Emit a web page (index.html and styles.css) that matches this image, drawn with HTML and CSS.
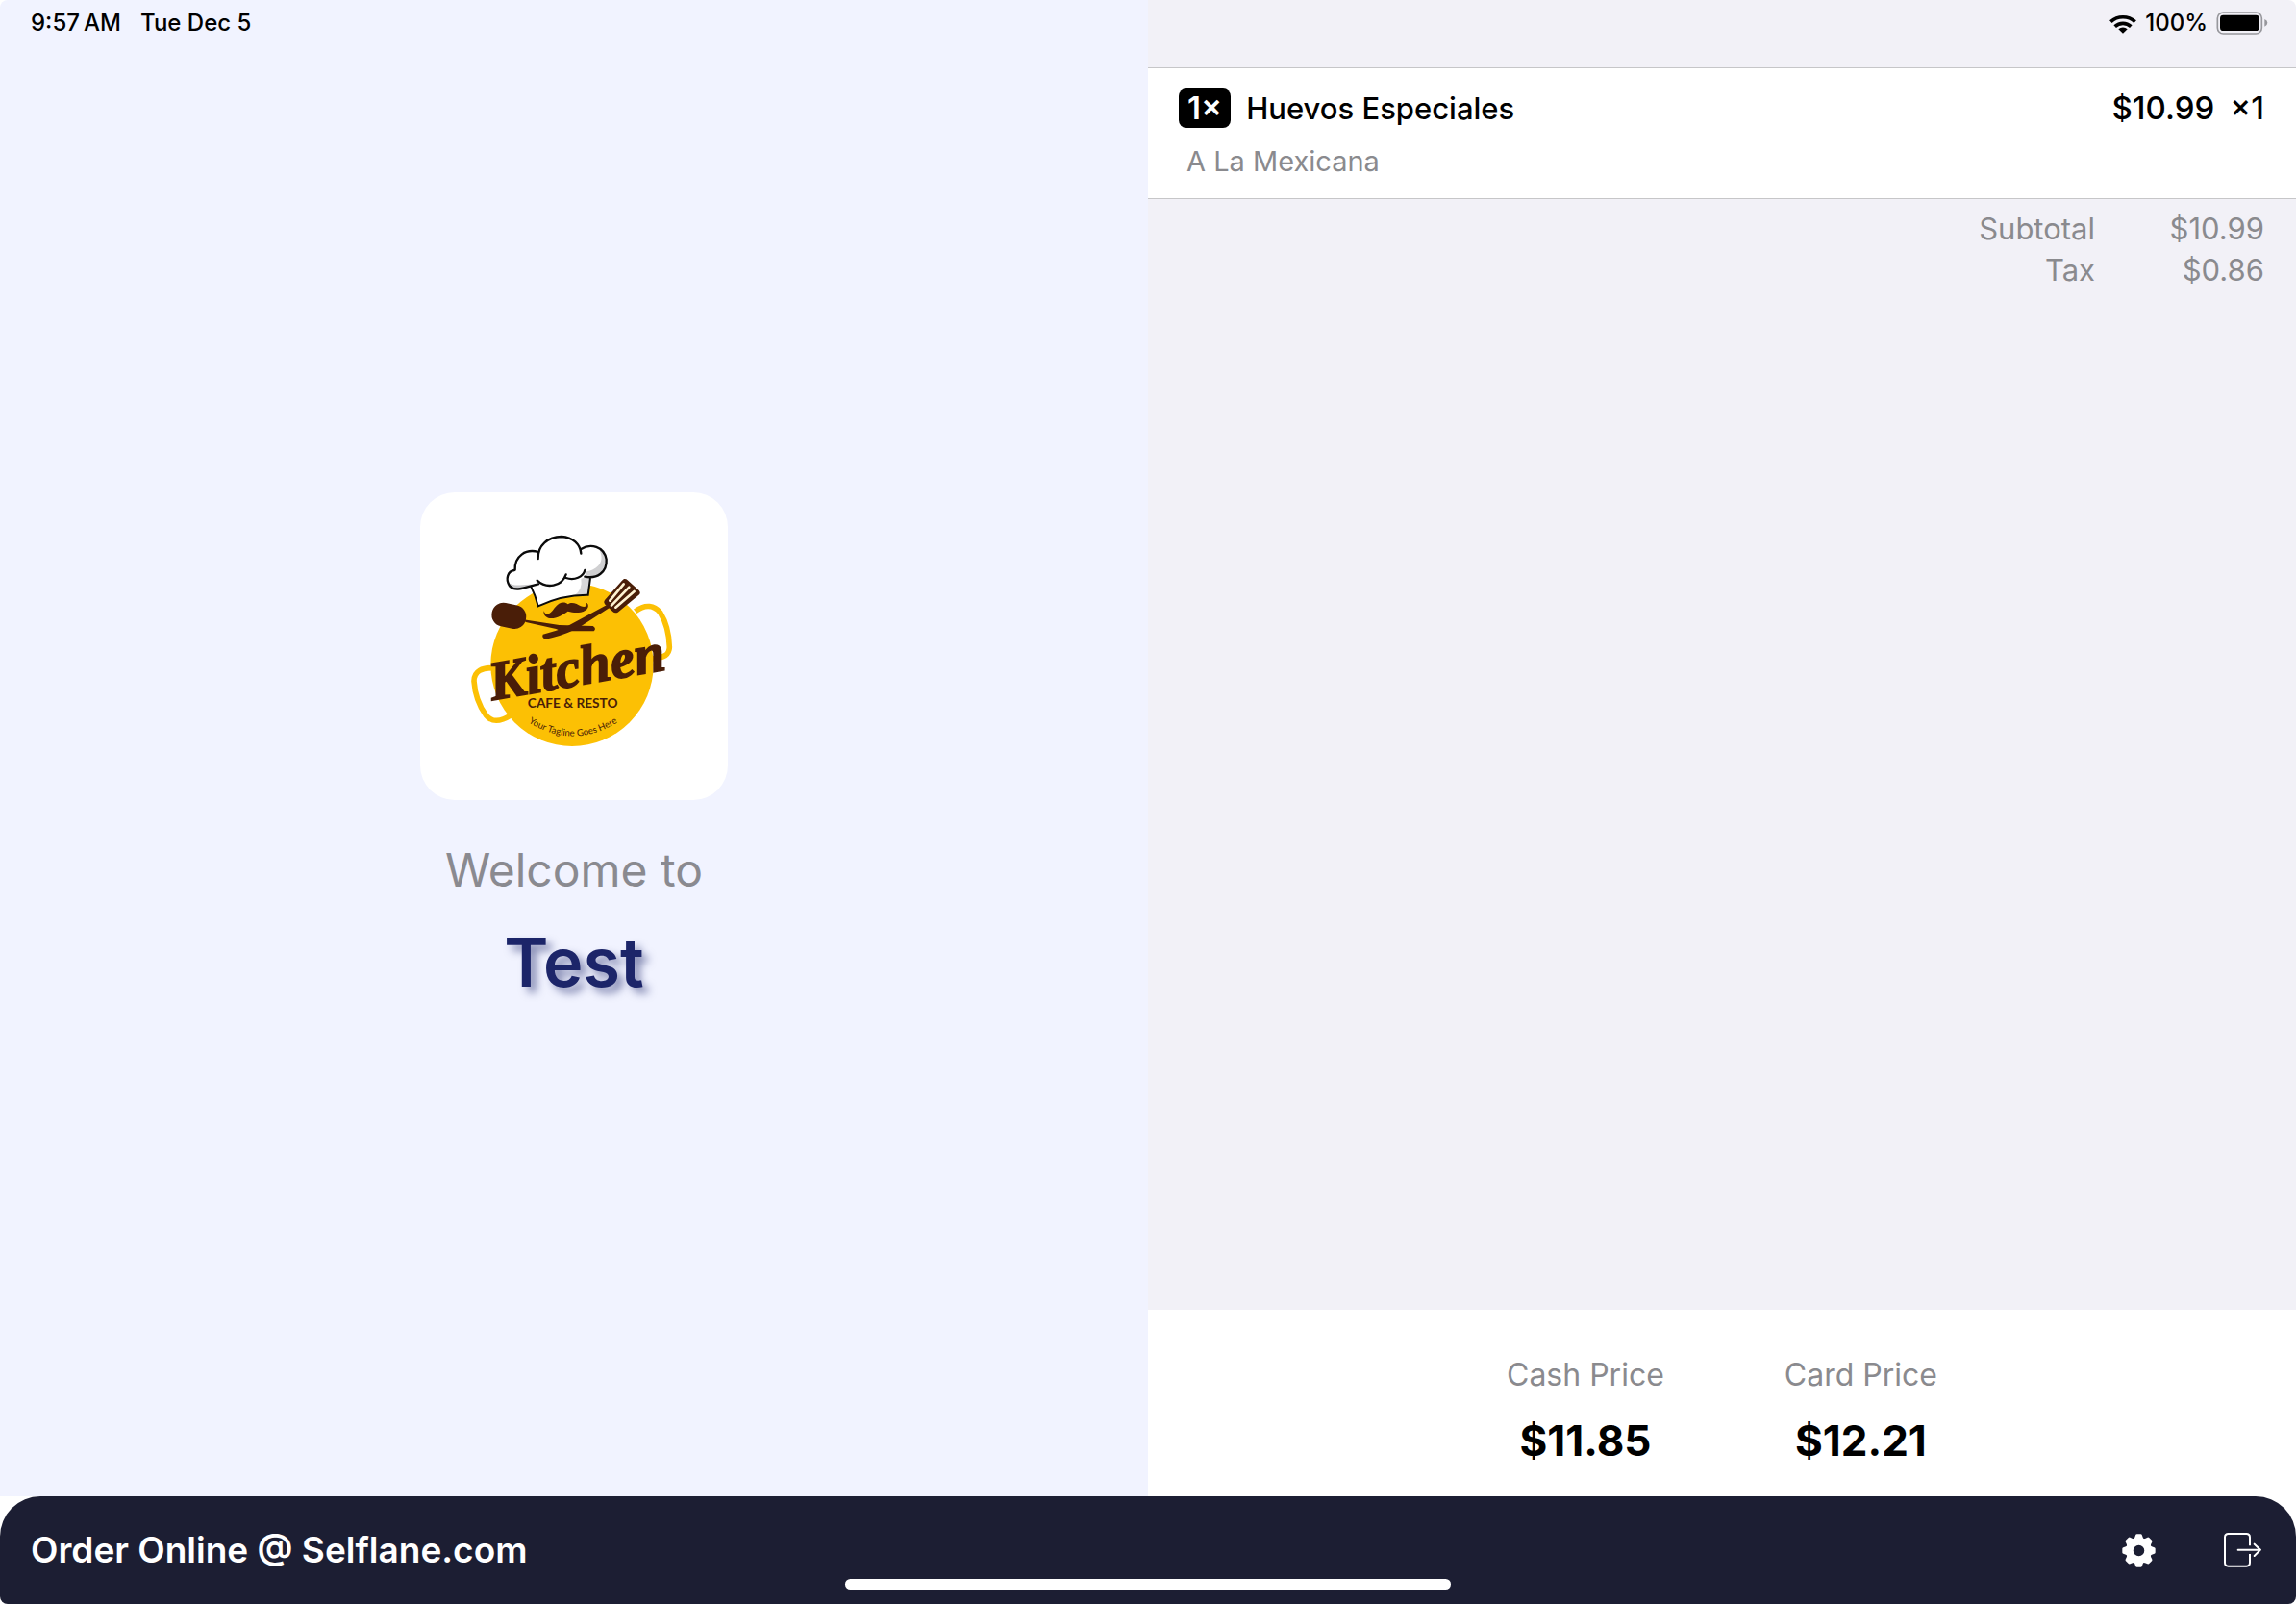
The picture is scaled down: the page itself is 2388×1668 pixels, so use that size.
FILE: index.html
```html
<!DOCTYPE html>
<html lang="en">
<head>
<meta charset="utf-8">
<meta name="viewport" content="width=device-width, initial-scale=1">
<title>Customer Display</title>
<link rel="stylesheet" href="styles.css">
</head>
<body>
<div class="screen">
  <header class="status">
    <div class="status-group">
      <span>9:57&#8201;AM</span>
      <span>Tue Dec 5</span>
    </div>
    <div class="status-group status-right">
      <svg class="wifi" viewBox="165 40 84 63" aria-hidden="true">
        <g fill="none" stroke="#000" stroke-width="11">
          <path d="M169 66A56 56 0 0 1 245 66"/>
          <path d="M182 81A36 36 0 0 1 232 81"/>
        </g>
        <path d="M207 102L193 89A20 20 0 0 1 221 89Z"/>
      </svg>
      <span>100%</span>
      <svg class="battery" viewBox="494 36 162 72" aria-hidden="true">
        <rect x="498" y="39" width="138" height="66" rx="18" fill="none" stroke="#97979c" stroke-width="5"/>
        <rect x="506" y="47" width="122" height="49" rx="10"/>
        <path d="M645 60Q654 64 654 71.500Q654 79 645 83Z" fill="#97979c"/>
      </svg>
    </div>
  </header>

  <main class="panes">
    <section class="welcome">
      <svg class="logo" viewBox="21 33 960 960" role="img" aria-label="Kitchen Cafe and Resto">
        <g fill="none" stroke="#fcc004" stroke-width="17">
          <path d="M692 404C725 380 752 386 770 408C790 440 798 480 799 516C798 540 784 548 745 552"/>
          <path d="M250 581C215 580 189 590 189 622C192 665 206 700 226 728C245 752 270 750 305 728"/>
        </g>
        <circle cx="495" cy="571" r="254" fill="#fcc004"/>
        <path d="M366 325Q381 355 389 388Q465 352 545 353L553 290Q470 260 366 325Z" fill="#fff"/>
        <path d="M553 292L545 351L502 355Q529 335 523 302Z" fill="#d6d6d8"/>
        <path d="M366 325Q381 355 389 388Q465 352 545 353L552 300" fill="none" stroke="#0b0b0b" stroke-width="6"/>
        <path d="M315 275C315 232 350 208 390 219C399 187 428 171 462 171C495 172 516 190 523 213C552 191 595 201 602 242C605 283 572 304 535 296C518 307 492 307 476 300C460 330 415 335 388 318C355 327 320 346 300 325C286 304 294 279 315 275Z" fill="#fff"/>
        <path d="M579 210C600 249 575 273 541 280L535 296C572 304 605 283 602 242C600 226 592 216 579 210Z" fill="#d0d0d2"/>
        <path d="M298 316C320 331 348 316 377 321C350 329 319 345 300 325Z" fill="#c7c7c9"/>
        <g fill="none" stroke="#0b0b0b" stroke-width="7" stroke-linecap="round">
          <path d="M317 275C315 232 350 208 390 219"/>
          <path d="M389 240C387 199 420 171 462 171C497 173 521 195 523 224"/>
          <path d="M523 210C552 191 595 201 602 242C605 283 572 304 535 296"/>
          <path d="M315 276C294 279 286 304 300 325C320 346 352 327 390 319"/>
          <path d="M386 308C415 335 463 327 476 289"/>
          <path d="M476 300C502 309 530 297 535 276"/>
        </g>
        <g fill="#4a1e08">
          <path d="M407 403C412 420 427 414 440 394C455 374 472 373 482 382C495 373 511 382 522 388C538 393 546 387 537 376C553 382 546 404 522 407C505 410 495 407 482 404C466 415 440 431 421 425C409 421 405 412 407 403Z"/>
          <rect x="244" y="381" width="108" height="74" rx="36" transform="rotate(12 298 418)"/>
          <path d="M339 428L353 431L455 447L560 450Q572 458 563 466Q510 466 460 466L445 459L351 438Z"/>
          <path d="M605 383L613 392L520 452L500 463Q460 482 413 491Q399 487 404 476Q440 467 470 456Z"/>
          <path d="M657 303Q664 302 668 307L704 339Q710 346 705 352L638 407Q629 412 622 405L597 382Q592 375 597 369L651 308Z"/>
        </g>
        <g stroke="#fff3d2" stroke-width="8" stroke-linecap="round">
          <path d="M656 319L613 371"/>
          <path d="M673 329L618 386"/>
          <path d="M689 342L631 392"/>
        </g>
        <text class="logo-name" transform="translate(246 682) rotate(-10)">Kitchen</text>
        <text class="logo-sub" x="497" y="705" text-anchor="middle">CAFE &amp; RESTO</text>
        <path id="tagline-curve" d="M340 738Q498 849 656 738" fill="none"/>
        <text class="logo-tagline" text-anchor="middle"><textPath href="#tagline-curve" startOffset="50%">Your Tagline Goes Here</textPath></text>
      </svg>
      <p class="greeting">Welcome to</p>
      <h1 class="store">Test</h1>
    </section>

    <section class="order">
      <article class="item">
        <div class="item-row">
          <span class="qty">1×</span>
          <h2 class="item-name">Huevos Especiales</h2>
          <span class="item-price">$10.99</span>
          <span>×1</span>
        </div>
        <p class="item-option">A La Mexicana</p>
      </article>
      <dl class="totals">
        <dt>Subtotal</dt><dd>$10.99</dd>
        <dt>Tax</dt><dd>$0.86</dd>
      </dl>
      <dl class="prices">
        <div class="price">
          <dt>Cash Price</dt>
          <dd>$11.85</dd>
        </div>
        <div class="price">
          <dt>Card Price</dt>
          <dd>$12.21</dd>
        </div>
      </dl>
    </section>
  </main>

  <footer class="bar">
    <p class="promo">Order Online @ Selflane.com</p>
    <button class="icon-button" type="button" aria-label="Settings">
      <svg class="gear" viewBox="-53 -53 106 106" aria-hidden="true">
        <defs><path id="tooth" d="M-18 -34Q-12 -40 -10 -49Q-9 -52 -6 -52H6Q9 -52 10 -49Q12 -40 18 -34Z"/></defs>
        <circle r="28" fill="none" stroke="#fff" stroke-width="21"/>
        <g fill="#fff">
          <use href="#tooth"/>
          <use href="#tooth" transform="rotate(45)"/>
          <use href="#tooth" transform="rotate(90)"/>
          <use href="#tooth" transform="rotate(135)"/>
          <use href="#tooth" transform="rotate(180)"/>
          <use href="#tooth" transform="rotate(225)"/>
          <use href="#tooth" transform="rotate(270)"/>
          <use href="#tooth" transform="rotate(315)"/>
        </g>
      </svg>
    </button>
    <button class="icon-button" type="button" aria-label="Sign out">
      <svg class="exit" viewBox="456 159 123 114" aria-hidden="true">
        <g fill="none" stroke="#fff" stroke-width="6" stroke-linecap="round" stroke-linejoin="round">
          <path stroke-linecap="butt" d="M540 202V176Q540 165 529 165H473Q462 165 462 176V255Q462 266 473 266H529Q540 266 540 255V228"/>
          <path d="M503 215H572M554 197L573 215L554 234"/>
        </g>
      </svg>
    </button>
    <div class="home-indicator"></div>
  </footer>
</div>
</body>
</html>
```

FILE: styles.css
```css
* {
  box-sizing: border-box;
  margin: 0;
}

body {
  background: #fff;
  color: #000;
  font-family: Inter, "Liberation Sans", sans-serif;
}

.screen {
  position: relative;
  display: flex;
  flex-direction: column;
  min-height: 100vh;
  border-radius: 8px;
  overflow: hidden;
}

/* The status bar floats over both panes */
.status {
  position: absolute;
  top: 0;
  left: 0;
  right: 0;
  display: flex;
  justify-content: space-between;
  padding: 8px 29px 8px 32px;
  font-size: 24px;
  line-height: 32px;
  font-weight: 500;
}

.status-group {
  display: flex;
  align-items: center;
  gap: 20px;
}

.status-right {
  gap: 9px;
}

.wifi {
  width: 28px;
  height: 21px;
}

.battery {
  width: 54px;
  height: 24px;
}

.panes {
  flex: 1;
  display: grid;
  grid-template-columns: 1fr 1fr;
}

.welcome {
  display: flex;
  flex-direction: column;
  align-items: center;
  justify-content: center;
  background: #f1f3ff;
}

.logo {
  width: 320px;
  height: 320px;
  border-radius: 36px;
  background: #fff;
}

.logo-name {
  fill: #4a1e08;
  stroke: #4a1e08;
  stroke-width: 5px;
  font-family: "Liberation Serif", serif;
  font-size: 172px;
  font-weight: 700;
  font-style: italic;
}

.logo-sub {
  fill: #4a1e08;
  font-family: Lato, sans-serif;
  font-size: 41px;
  font-weight: 700;
}

.logo-tagline {
  fill: #4a1e08;
  font-family: Lato, sans-serif;
  font-size: 29px;
}

.greeting {
  margin-top: 43px;
  color: #8a8a90;
  font-size: 48px;
  line-height: 60px;
}

.store {
  margin-top: 22px;
  color: #1c2569;
  font-size: 70px;
  line-height: 88px;
  font-weight: 600;
  text-shadow: 6px 6px 8px rgba(28, 37, 105, 0.5);
}

.order {
  display: flex;
  flex-direction: column;
  padding-top: 70px;
  background: #f2f1f7;
}

.item {
  padding: 21px 33px 20px 32px;
  border-top: 1px solid #c6c6c8;
  border-bottom: 1px solid #c6c6c8;
  background: #fff;
  font-size: 33px;
  font-weight: 500;
}

.item-row {
  display: flex;
  align-items: center;
  gap: 16px;
  line-height: 41px;
}

.qty {
  padding: 0 9px;
  border-radius: 8px;
  background: #000;
  color: #fff;
  font-weight: 600;
}

.item-name {
  flex: 1;
  font-size: 31px;
  font-weight: 500;
}

.item-option {
  margin-top: 17px;
  padding-left: 8px;
  color: #8a8a8e;
  font-size: 29px;
  line-height: 36px;
  font-weight: 400;
}

.totals {
  flex: 1;
  display: grid;
  grid-template-columns: 1fr 176px;
  align-content: start;
  padding: 9px 33px 0;
  color: #8a8a8e;
  font-size: 31px;
  line-height: 43px;
  text-align: right;
}

.prices {
  display: flex;
  justify-content: center;
  gap: 125px;
  padding: 48px 32px 33px;
  background: #fff;
  text-align: center;
}

.price dt {
  color: #8a8a8e;
  font-size: 32px;
  line-height: 40px;
}

.price dd {
  margin-top: 23px;
  font-size: 44px;
  line-height: 50px;
  font-weight: 700;
}

.bar {
  position: relative;
  display: flex;
  align-items: center;
  gap: 70px;
  padding: 32px 35px 32px 32px;
  border-radius: 42px 42px 0 0;
  background: #1c1e33;
  color: #fff;
}

.promo {
  flex: 1;
  font-size: 37px;
  line-height: 48px;
  font-weight: 600;
}

.icon-button {
  display: flex;
  padding: 0;
  border: 0;
  background: none;
}

.gear {
  width: 35px;
  height: 35px;
}

.exit {
  width: 41px;
  height: 38px;
}

.home-indicator {
  position: absolute;
  bottom: 15px;
  left: 50%;
  width: 630px;
  height: 11px;
  margin-left: -315px;
  border-radius: 6px;
  background: #fff;
}
```
